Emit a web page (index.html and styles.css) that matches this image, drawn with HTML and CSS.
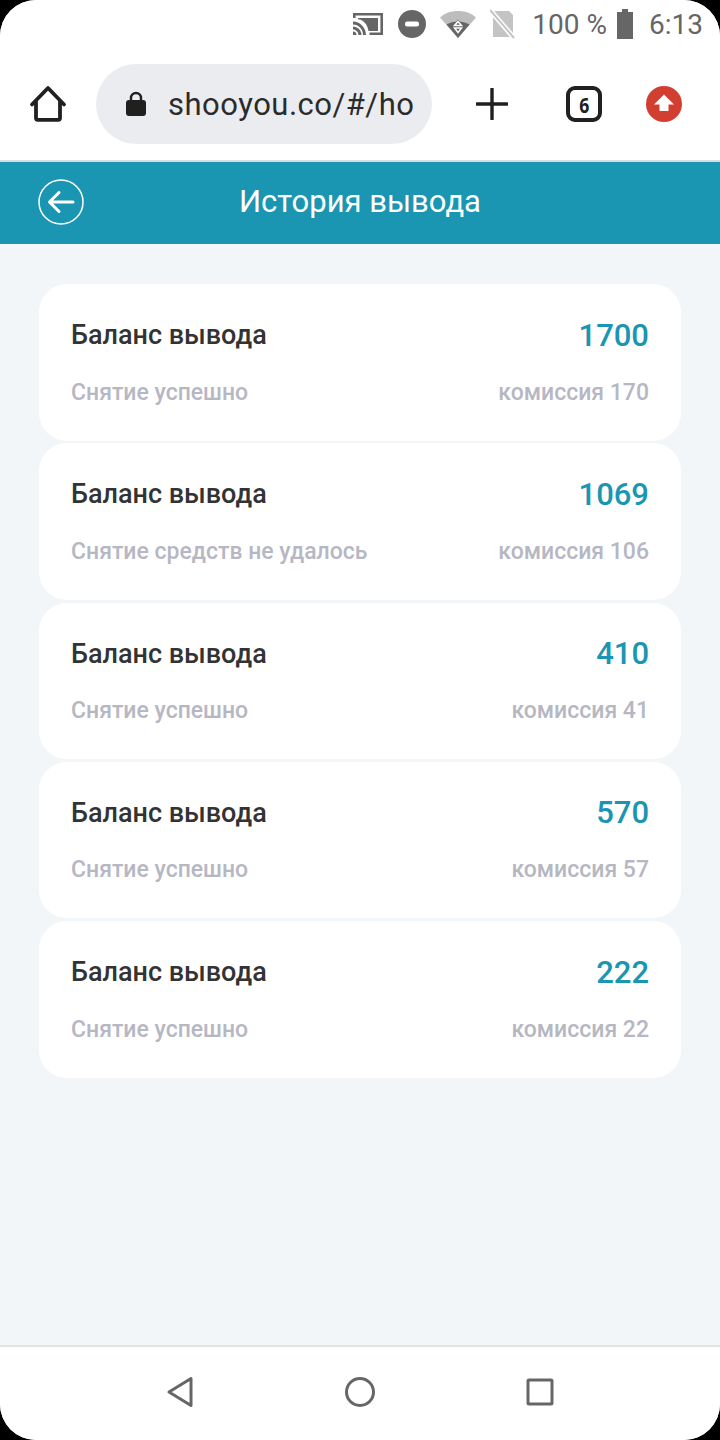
FILE: index.html
```html
<!DOCTYPE html>
<html lang="ru">
<head>
    <meta charset="UTF-8">
    <meta name="viewport" content="width=device-width, initial-scale=1.0">
    <title>История вывода</title>
    <link rel="stylesheet" href="styles.css">
</head>
<body>
    <div class="screen">
        <div class="status-bar">
            <svg class="st-cast" width="32" height="26" viewBox="0 0 32 26">
                <path d="M1 2h30v22H17.500v-2.600H28.400V4.600H3.600V7H1z" fill="#666"/>
                <path d="M6 7h20v13H16.500C15.500 13 11 8.800 6 8.300z" fill="#666"/>
                <path d="M1 10.500c6.800 0 13 6 13 13.500h-3c0-6-4.500-10.500-10-10.500zM1 15.500c4.500 0 8.500 4 8.500 8.500h-3c0-3-2.500-5.500-5.500-5.500zM1 20.500a3.500 3.500 0 0 1 3.500 3.500H1z" fill="#666"/>
            </svg>
            <svg class="st-dnd" width="28" height="28" viewBox="0 0 28 28">
                <circle cx="14" cy="14" r="14" fill="#666"/>
                <rect x="7" y="11.500" width="14" height="5" rx="2" fill="#fff"/>
            </svg>
            <svg class="st-wifi" width="36" height="28" viewBox="0 0 36 28">
                <path d="M0 7.500C5 3 11 1 18 1s13 2 18 6.500L18 28z" fill="#bdbdbd"/>
                <path d="M6.500 14.500C10 12.500 14 11.500 18 11.500s8 1 11.500 3L18 28z" fill="#666"/>
                <path d="M18 9.500l5 6H13z" fill="#666"/>
                <path d="M18 11.500l3.500 4h-7zM14.500 18h7L18 22.500z" fill="none" stroke="#fff" stroke-width="1.500"/>
            </svg>
            <svg class="st-sim" width="26" height="30" viewBox="0 0 26 30">
                <path d="M3 2h16l4 4v22H3z" fill="#c4c4c4"/>
                <path d="M0 1l24 28" stroke="#fff" stroke-width="5"/>
                <path d="M0 1l24 28" stroke="#c4c4c4" stroke-width="2"/>
            </svg>
            <span class="st-text st-percent">100 %</span>
            <svg class="st-battery" width="16" height="30" viewBox="0 0 16 30">
                <path d="M5 0h6v3h5v27H0V3h5z" fill="#666"/>
            </svg>
            <span class="st-text st-time">6:13</span>
        </div>

        <div class="browser-bar">
            <svg class="home-icon" width="40" height="40" viewBox="0 0 40 40">
                <path d="M4 20.500L20 4l16 16.500M8 17v17a1.800 1.800 0 0 0 1.800 1.800h20.400A1.800 1.800 0 0 0 32 34V17" fill="none" stroke="#202020" stroke-width="3.800" stroke-linecap="round" stroke-linejoin="round"/>
            </svg>
            <div class="url-box">
                <svg class="lock-icon" width="20" height="26" viewBox="0 0 20 26">
                    <path d="M5 10V7a5 5 0 0 1 10 0v3" fill="none" stroke="#202020" stroke-width="2.400"/>
                    <rect y="9" width="20" height="16" rx="3" fill="#202020"/>
                </svg>
                <span class="url-text">shooyou.co/#/ho</span>
            </div>
            <svg class="plus-icon" width="32" height="32" viewBox="0 0 32 32">
                <path d="M1 16h30M16 1v30" stroke="#202020" stroke-width="3.400" stroke-linecap="round"/>
            </svg>
            <div class="tab-count"><span class="tab-digit">6</span></div>
            <svg class="upload-icon" width="36" height="36" viewBox="0 0 36 36">
                <circle cx="18" cy="18" r="18" fill="#d23f31"/>
                <path d="M18 8.500L28 18.500h-5.500v6.500h-9v-6.500H8z" fill="#fff"/>
            </svg>
        </div>

        <div class="page-header">
            <svg class="back-icon" width="46" height="46" viewBox="0 0 46 46">
                <circle cx="23" cy="23" r="22" fill="none" stroke="#fff" stroke-width="1.500"/>
                <path d="M35 23H12M21 13.500L11.500 23l9.500 9.500" fill="none" stroke="#fff" stroke-width="3" stroke-linecap="round" stroke-linejoin="round"/>
            </svg>
            <h1>История вывода</h1>
        </div>

        <div class="content">
            <div class="card">
                <div class="row"><span class="label">Баланс вывода</span><span class="amount">1700</span></div>
                <div class="row"><span class="note">Снятие успешно</span><span class="note">комиссия 170</span></div>
            </div>
            <div class="card">
                <div class="row"><span class="label">Баланс вывода</span><span class="amount">1069</span></div>
                <div class="row"><span class="note">Снятие средств не удалось</span><span class="note">комиссия 106</span></div>
            </div>
            <div class="card">
                <div class="row"><span class="label">Баланс вывода</span><span class="amount">410</span></div>
                <div class="row"><span class="note">Снятие успешно</span><span class="note">комиссия 41</span></div>
            </div>
            <div class="card">
                <div class="row"><span class="label">Баланс вывода</span><span class="amount">570</span></div>
                <div class="row"><span class="note">Снятие успешно</span><span class="note">комиссия 57</span></div>
            </div>
            <div class="card">
                <div class="row"><span class="label">Баланс вывода</span><span class="amount">222</span></div>
                <div class="row"><span class="note">Снятие успешно</span><span class="note">комиссия 22</span></div>
            </div>
        </div>

        <div class="nav-bar">
            <svg width="28" height="32" viewBox="0 0 28 32">
                <path d="M25 2.500v27L3 16z" fill="none" stroke="#666" stroke-width="3" stroke-linejoin="round"/>
            </svg>
            <svg width="32" height="32" viewBox="0 0 32 32">
                <circle cx="16" cy="16" r="13.500" fill="none" stroke="#666" stroke-width="3"/>
            </svg>
            <svg width="28" height="28" viewBox="0 0 28 28">
                <rect x="2" y="2" width="24" height="24" rx="1" fill="none" stroke="#666" stroke-width="3"/>
            </svg>
        </div>
    </div>
</body>
</html>
```

FILE: styles.css
```css
html, body {
    margin: 0;
    padding: 0;
    background: #000;
}
body {
    font-family: Roboto, "Noto Sans", sans-serif;
    width: 720px;
    height: 1440px;
    overflow: hidden;
}
.screen {
    width: 720px;
    height: 1440px;
    background: #f3f6f9;
    border-radius: 36px;
    overflow: hidden;
    display: flex;
    flex-direction: column;
}
.status-bar {
    height: 48px;
    background: #fff;
    display: flex;
    align-items: center;
    justify-content: flex-end;
    padding-right: 17px;
    box-sizing: border-box;
    flex-shrink: 0;
}
.status-bar svg {
    display: block;
    flex-shrink: 0;
}
.st-text {
    font-size: 28px;
    color: #666;
    line-height: 48px;
    margin-top: 2px;
}
.st-dnd { margin-left: 14px; }
.st-wifi { margin-left: 14px; }
.st-sim { margin-left: 14px; }
.st-percent { margin-left: 16px; }
.st-battery { margin-left: 10px; }
.st-time { margin-left: 16px; }
.browser-bar {
    height: 112px;
    background: #fff;
    display: flex;
    align-items: center;
    flex-shrink: 0;
}
.home-icon {
    margin-left: 28px;
    flex-shrink: 0;
}
.url-box {
    width: 336px;
    height: 80px;
    margin-left: 28px;
    background: #ebecf0;
    border-radius: 40px;
    display: flex;
    align-items: center;
    padding-left: 30px;
    box-sizing: border-box;
    flex-shrink: 0;
}
.lock-icon { flex-shrink: 0; }
.url-text {
    margin-left: 22px;
    font-size: 31px;
    color: #2b2b2b;
    white-space: nowrap;
    letter-spacing: 0.5px;
}
.plus-icon {
    margin-left: 44px;
    flex-shrink: 0;
}
.tab-count {
    width: 36px;
    height: 36px;
    box-sizing: border-box;
    margin-left: 58px;
    border: 4px solid #202020;
    border-radius: 9px;
    display: flex;
    align-items: center;
    justify-content: center;
    font-family: "Open Sans", sans-serif;
    font-size: 22px;
    font-weight: 700;
    color: #202020;
    flex-shrink: 0;
}
.tab-digit {
    display: inline-block;
    transform: scaleX(0.8);
}
.upload-icon {
    margin-left: 44px;
    flex-shrink: 0;
}
.page-header {
    height: 84px;
    background: #1a95b2;
    border-top: 2px solid #d5dfe2;
    box-sizing: border-box;
    display: flex;
    align-items: center;
    justify-content: center;
    position: relative;
    flex-shrink: 0;
}
.page-header h1 {
    margin: 0 0 4px;
    font-size: 31px;
    font-weight: 400;
    color: #fff;
}
.back-icon {
    position: absolute;
    left: 38px;
    top: 17px;
}
.content {
    flex: 1;
    padding: 40px 39px 0;
    display: flex;
    flex-direction: column;
    gap: 2.75px;
}
.card {
    height: 156.5px;
    background: #fff;
    border-radius: 28px;
    padding: 0 32px;
    box-sizing: border-box;
    flex-shrink: 0;
}
.row {
    display: flex;
    justify-content: space-between;
    align-items: center;
}
.row:first-child {
    height: 50px;
    margin-top: 26px;
}
.row:last-child {
    height: 30px;
    margin-top: 17px;
}
.label {
    font-size: 27px;
    font-weight: 500;
    color: #333;
}
.amount {
    font-size: 31px;
    font-weight: 500;
    color: #1a95b2;
}
.note {
    font-size: 23px;
    font-weight: 500;
    color: #b6b7c3;
}
.nav-bar {
    height: 95px;
    background: #fff;
    border-top: 2px solid #e2e4e4;
    box-sizing: border-box;
    display: flex;
    align-items: center;
    justify-content: center;
    gap: 150px;
    padding-bottom: 4px;
    flex-shrink: 0;
}
```
